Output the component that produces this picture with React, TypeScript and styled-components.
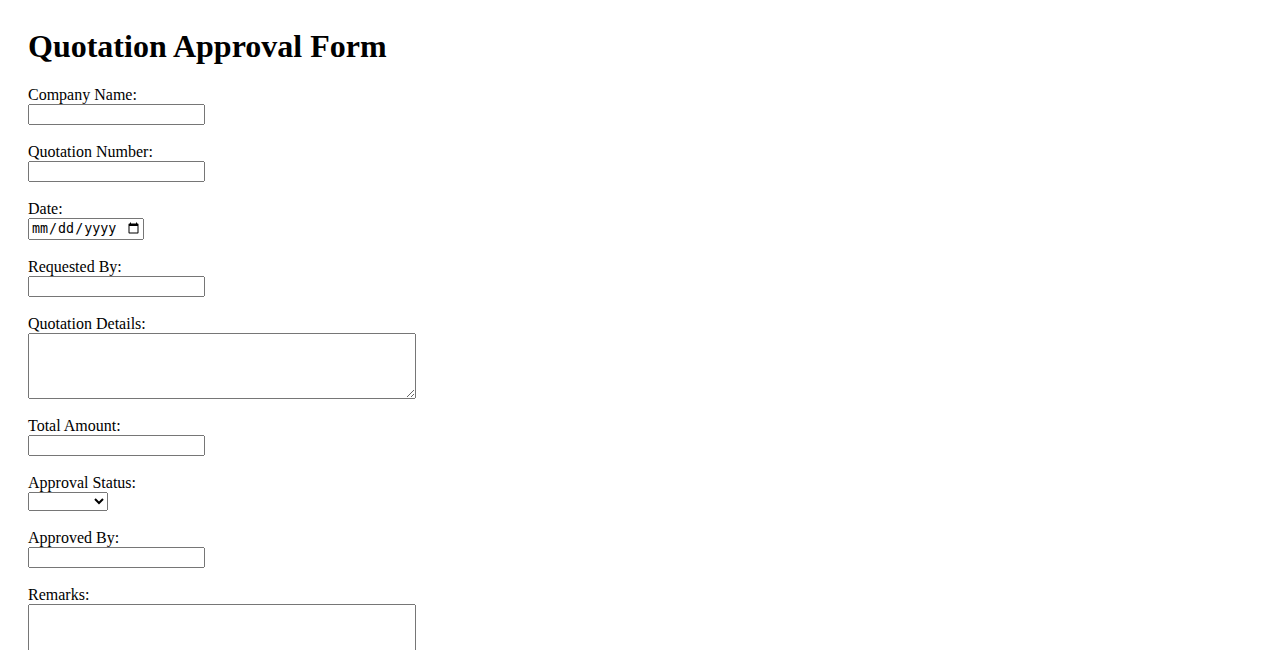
import styled, { createGlobalStyle } from 'styled-components'

const GlobalStyle = createGlobalStyle`
  body {
    margin: 0;
    background: #ffffff;
    color: #000000;
    font-family: 'Liberation Serif', 'Times New Roman', serif;
    font-size: 16px;
  }
`

const Page = styled.div`
  padding: 28px;
`

const Title = styled.h1`
  font-size: 32px;
  font-weight: 700;
  margin: 0 0 21px;
  line-height: 37px;
`

const Field = styled.div`
  margin-bottom: 18px;
`

const Label = styled.label`
  display: block;
  line-height: 18px;
`

const TextInput = styled.input`
  display: block;
  box-sizing: border-box;
  width: 177px;
  height: 21px;
  margin: 0;
`

const DateInput = styled.input`
  display: block;
  box-sizing: border-box;
  width: 116px;
  height: 22px;
  margin: 0;
`

const Select = styled.select`
  display: block;
  box-sizing: border-box;
  width: 80px;
  height: 19px;
  margin: 0;
`

const TextArea = styled.textarea`
  display: block;
  box-sizing: border-box;
  width: 388px;
  height: 66px;
  margin: 0;
`

const App = () => {
  return (
    <Page>
      <GlobalStyle />
      <Title>Quotation Approval Form</Title>
      <form onSubmit={(e) => e.preventDefault()}>
        <Field>
          <Label htmlFor="company">Company Name:</Label>
          <TextInput id="company" type="text" />
        </Field>
        <Field>
          <Label htmlFor="quoteNo">Quotation Number:</Label>
          <TextInput id="quoteNo" type="text" />
        </Field>
        <Field>
          <Label htmlFor="date">Date:</Label>
          <DateInput id="date" type="date" />
        </Field>
        <Field>
          <Label htmlFor="requestedBy">Requested By:</Label>
          <TextInput id="requestedBy" type="text" />
        </Field>
        <Field>
          <Label htmlFor="details">Quotation Details:</Label>
          <TextArea id="details" />
        </Field>
        <Field>
          <Label htmlFor="total">Total Amount:</Label>
          <TextInput id="total" type="text" />
        </Field>
        <Field>
          <Label htmlFor="status">Approval Status:</Label>
          <Select id="status" defaultValue="">
            <option value=""></option>
            <option value="approved">Approved</option>
            <option value="rejected">Rejected</option>
            <option value="pending">Pending</option>
          </Select>
        </Field>
        <Field>
          <Label htmlFor="approvedBy">Approved By:</Label>
          <TextInput id="approvedBy" type="text" />
        </Field>
        <Field>
          <Label htmlFor="remarks">Remarks:</Label>
          <TextArea id="remarks" />
        </Field>
      </form>
    </Page>
  )
}

export default App
